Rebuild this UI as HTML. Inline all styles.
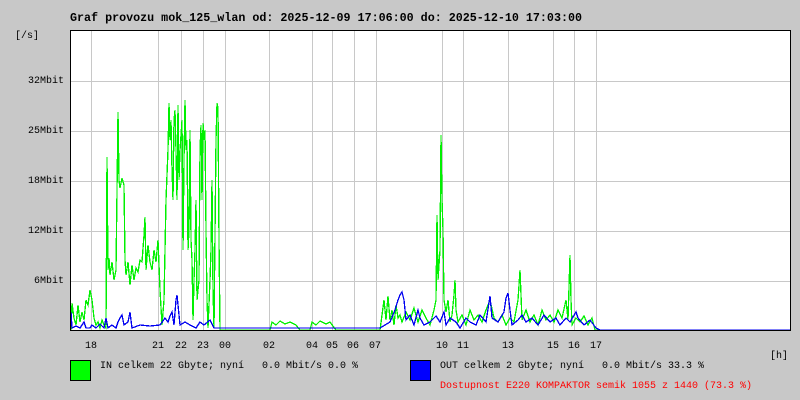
<!DOCTYPE html>
<html><head><meta charset="utf-8"><style>
body{margin:0;background:#c8c8c8;width:800px;height:400px;overflow:hidden;position:relative;font-family:"Liberation Mono",monospace;font-size:10px;color:#000}
.t{position:absolute;white-space:pre;line-height:12px}
.y{position:absolute;right:736px;white-space:pre;line-height:12px}
</style></head><body>
<div class="t" style="left:70px;top:12px;font-weight:bold;font-size:11.7px">Graf provozu mok_125_wlan od: 2025-12-09 17:06:00 do: 2025-12-10 17:03:00</div>
<div class="t" style="left:15px;top:31px">[/s]</div>
<div class="y" style="top:76px">32Mbit</div>
<div class="y" style="top:126px">25Mbit</div>
<div class="y" style="top:176px">18Mbit</div>
<div class="y" style="top:226px">12Mbit</div>
<div class="y" style="top:276px">6Mbit</div>
<svg style="position:absolute;left:0;top:0" width="800" height="400">
<rect x="70" y="30" width="721" height="300" fill="#fff"/>
<g stroke="#c8c8c8" stroke-width="1">
<path d="M91.5 30V330M158.5 30V330M181.5 30V330M203.5 30V330M225.5 30V330M269.5 30V330M312.5 30V330M332.5 30V330M354.5 30V330M376.5 30V330M442.5 30V330M463.5 30V330M508.5 30V330M553.5 30V330M574.5 30V330M596.5 30V330"/>
<path d="M70 81.5H791M70 131.5H791M70 181.5H791M70 231.5H791M70 281.5H791"/>
</g>
<g fill="none" stroke-width="1.3" shape-rendering="crispEdges">
<polyline stroke="#00f000" points="71,330 72,303 74,318 76,325 78,305 80,322 82,312 84,320 86,300 88,305 90,290 92,300 94,318 96,325 98,322 100,328 102,320 104,325 106,328 107,157 108,270 109,258 110,275 112,262 114,280 116,270 118,112 119,180 120,188 122,178 124,185 125,260 126,275 128,262 130,285 132,265 134,280 136,268 138,272 140,260 142,262 144,235 145,217 146,270 148,245 150,262 152,270 154,250 156,262 158,240 160,290 162,325 164,300 165,250 166,200 168,150 169,103 170,140 171,120 172,170 173,200 174,120 175,110 176,150 177,200 178,105 179,180 180,150 182,120 183,250 184,160 185,100 186,150 187,140 188,250 189,230 190,130 191,240 192,260 193,320 194,280 195,250 196,200 197,300 199,280 200,150 201,125 202,200 203,123 204,140 205,130 206,230 207,300 208,328 210,280 211,250 212,180 213,290 214,328 216,140 217,103 218,108 219,240 220,330 270,330 272,322 276,325 280,321 285,324 290,322 296,325 300,330 310,330 312,322 316,325 320,321 326,324 330,322 336,330 380,330 382,315 384,300 386,320 388,296 390,320 392,310 394,325 396,305 398,318 400,315 402,322 406,312 410,320 414,308 418,322 422,310 426,318 430,325 434,310 436,300 437,215 438,280 440,250 441,135 442,200 443,230 444,300 446,312 448,300 450,322 452,315 454,295 455,280 456,310 458,322 462,315 466,325 470,310 474,320 478,315 482,322 486,310 490,300 494,318 498,322 502,315 506,325 510,318 514,322 518,300 520,270 522,320 526,310 530,322 534,315 538,325 542,310 546,320 550,315 554,322 558,310 562,318 566,300 568,320 570,255 571,300 572,325 576,318 580,322 584,316 588,325 592,318 595,330 791,330"/>
<polyline stroke="#0000f0" points="71,312 72,328 76,326 80,328 84,322 86,328 90,328 92,325 96,328 100,324 104,328 106,318 108,328 112,325 116,328 118,322 120,318 122,315 124,325 128,322 130,312 132,328 140,325 150,326 160,325 165,318 168,322 170,316 172,312 174,325 176,300 177,295 178,305 180,325 185,322 190,325 196,328 200,322 204,325 210,320 214,328 220,328 380,328 390,322 395,310 398,300 400,295 402,292 404,300 406,320 410,315 414,325 418,310 420,318 424,325 430,322 436,316 440,322 444,312 446,325 450,318 456,322 460,328 466,318 470,322 476,325 480,315 486,322 490,296 492,318 498,322 504,312 506,298 508,293 510,310 512,325 518,320 522,315 526,322 532,318 538,325 544,315 550,322 556,318 560,325 566,318 570,322 576,312 578,318 584,325 590,320 596,328 600,330 791,330"/>
</g>
<rect x="70.5" y="30.5" width="720" height="300" fill="none" stroke="#000" stroke-width="1"/>
<rect x="70.5" y="360.5" width="20" height="20" fill="#00ff00" stroke="#000"/>
<rect x="410.5" y="360.5" width="20" height="20" fill="#0000ff" stroke="#000"/>
</svg>
<div class="t" style="left:85px;top:341px">18</div>
<div class="t" style="left:152px;top:341px">21</div>
<div class="t" style="left:175px;top:341px">22</div>
<div class="t" style="left:197px;top:341px">23</div>
<div class="t" style="left:219px;top:341px">00</div>
<div class="t" style="left:263px;top:341px">02</div>
<div class="t" style="left:306px;top:341px">04</div>
<div class="t" style="left:326px;top:341px">05</div>
<div class="t" style="left:347px;top:341px">06</div>
<div class="t" style="left:369px;top:341px">07</div>
<div class="t" style="left:436px;top:341px">10</div>
<div class="t" style="left:457px;top:341px">11</div>
<div class="t" style="left:502px;top:341px">13</div>
<div class="t" style="left:547px;top:341px">15</div>
<div class="t" style="left:568px;top:341px">16</div>
<div class="t" style="left:590px;top:341px">17</div>
<div class="t" style="left:770px;top:351px">[h]</div>
<div class="t" style="left:100px;top:361px">IN celkem 22 Gbyte; nyní   0.0 Mbit/s 0.0 %</div>
<div class="t" style="left:440px;top:361px">OUT celkem 2 Gbyte; nyní   0.0 Mbit/s 33.3 %</div>
<div class="t" style="left:440px;top:381px;color:#ff0000">Dostupnost E220 KOMPAKTOR semik 1055 z 1440 (73.3 %)</div>
</body></html>
